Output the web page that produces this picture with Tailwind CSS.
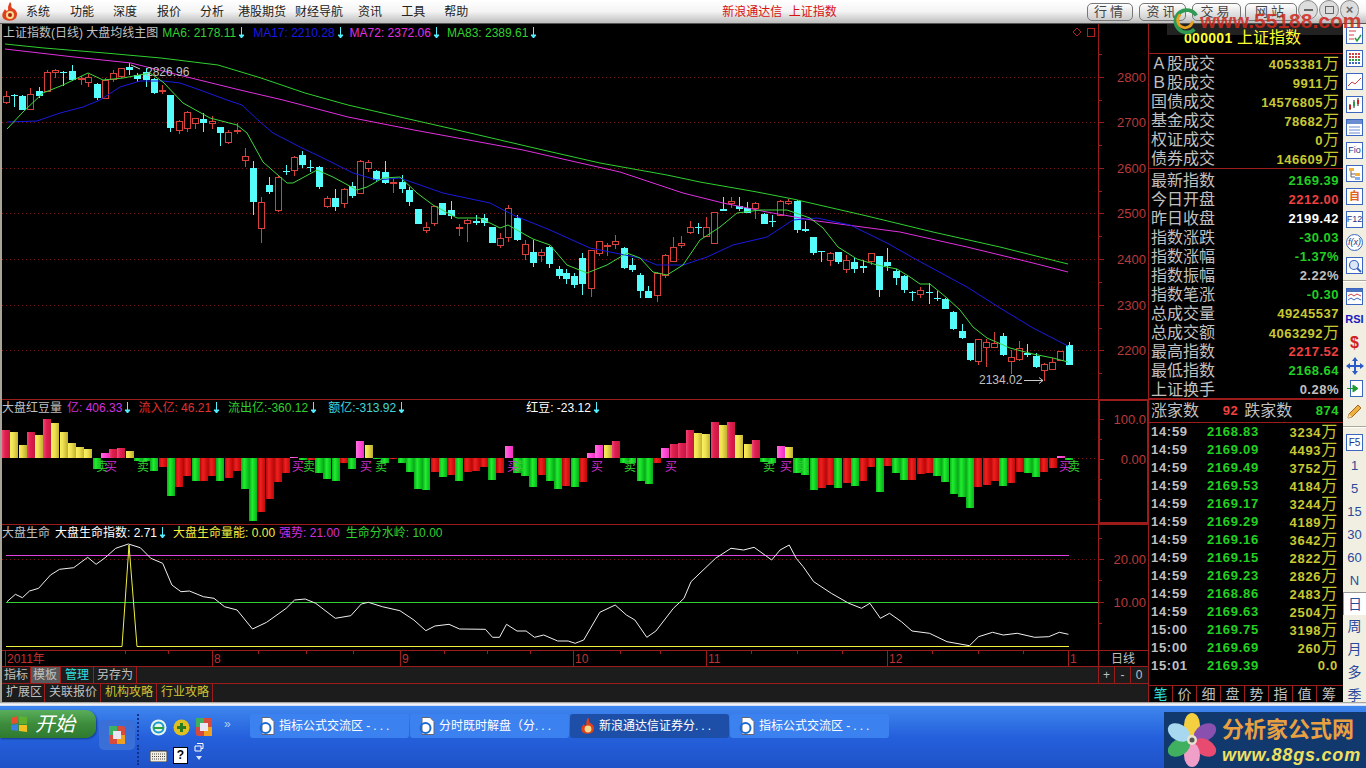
<!DOCTYPE html>
<html lang="zh-CN">
<head>
  <meta charset="UTF-8" />
  <title>新浪通达信 上证指数</title>
  <script src="https://cdn.jsdelivr.net/npm/@tailwindcss/browser@4"></script>
</head>
<body class="w-[1366px] h-[768px] overflow-hidden bg-black font-['Liberation_Sans','Noto_Sans_CJK_SC',sans-serif]">

  <!-- menu bar -->
  <header class="relative z-10 h-[24px] flex items-center bg-gradient-to-b from-white via-[#f4f4f4] to-[#bdbdbd] border-b border-[#555] text-[12px] text-[#222]">
    <svg class="absolute left-[1px] top-[1px]" width="18" height="21" viewBox="0 0 18 21">
      <path d="M9 1 C12 4 8 6 13 8 C16 10 17 13 15 17 C13 20 5 21 2 17 C0 13 3 10 4 8 C5 11 8 10 7 7 C7 5 8 3 9 1Z" fill="#e0401c" />
      <circle cx="9" cy="14" r="4" fill="#f4d88c" />
      <circle cx="9" cy="14" r="2" fill="#b02010" />
    </svg>
    <nav class="flex pl-[26px]">
      <span>系统</span><span class="ml-[20px]">功能</span><span class="ml-[19px]">深度</span><span class="ml-[20px]">报价</span><span class="ml-[19px]">分析</span><span class="ml-[14px]">港股期货</span><span class="ml-[9px]">财经导航</span><span class="ml-[15px]">资讯</span><span class="ml-[19px]">工具</span><span class="ml-[19px]">帮助</span>
    </nav>
    <span class="ml-[254px] text-[#d81010] whitespace-nowrap">新浪通达信&nbsp;&nbsp;上证指数</span>
    <div class="ml-auto flex items-center gap-[6px] pr-[69px] text-[13px] text-[#444] tracking-[3px]">
      <span class="w-[46px] h-[18px] flex items-center justify-center rounded-[5px] border border-[#777] bg-gradient-to-b from-white to-[#ccc]">行情</span>
      <span class="w-[47px] h-[18px] flex items-center justify-center rounded-[5px] border border-[#777] bg-gradient-to-b from-white to-[#ccc]">资讯</span>
      <span class="w-[49px] h-[18px] flex items-center justify-center rounded-[5px] border border-[#777] bg-gradient-to-b from-white to-[#ccc]">交易</span>
      <span class="-ml-[2px] w-[52px] h-[18px] flex items-center justify-center rounded-[5px] border border-[#777] bg-gradient-to-b from-white to-[#ccc]">网站</span>
    </div>
    <!-- window buttons -->
    <div class="absolute right-[7px] top-0 flex gap-[1px]">
      <span class="w-[20px] h-[20px] rounded-full border border-[#888] bg-[#ddd] flex items-center justify-center"><span class="w-[9px] h-[2px] bg-[#666]"></span></span>
      <span class="w-[20px] h-[20px] rounded-full border border-[#888] bg-[#ddd] flex items-center justify-center"><span class="w-[9px] h-[8px] border border-[#666]"></span></span>
      <span class="w-[19px] h-[20px] rounded-full border border-[#888] bg-[#ddd] flex items-center justify-center text-[13px] font-bold text-[#666]">×</span>
    </div>
    <!-- forum watermark -->
    <svg class="absolute left-[1172px] top-[7px]" width="28" height="28" viewBox="0 0 30 30">
      <path d="M26 9 A12 12 0 1 0 24 24" fill="none" stroke="#2f9a52" stroke-width="4" />
      <path d="M9 8 A8 8 0 1 0 22 15" fill="none" stroke="#e8a020" stroke-width="3" />
    </svg>
    <span class="absolute left-[1200px] top-[9px] text-[21px] leading-[24px] font-bold text-[#d0281c]/85 whitespace-nowrap">www.55188.com</span>
  </header>

  <main class="flex h-[678px]">
    <!-- left: chart panels -->
    <section class="w-[1148px] flex flex-col border-l-2 border-[#a8a498]">
      <div class="relative h-[376px] border-b border-[#9c1c1c]">
        <svg id="kline" class="block" width="1146" height="375" viewBox="2 24 1146 375"></svg>
        <div class="absolute left-[1px] top-[1px] flex items-center h-[16px] text-[12px] text-[#c0c0c0]">
          <span>上证指数(日线) 大盘均线主图</span>
          <span class="ml-[4px] text-[#30d030]">MA6: 2178.11</span>
          <svg class="ml-[2px]" width="7" height="12" viewBox="0 0 7 12"><path d="M3.5 0V11M1 8h5l-2.500 3z" stroke="#55eeff" fill="#55eeff" /></svg>
          <span class="ml-[8px] text-[#1a1ae0]">MA17: 2210.28</span>
          <svg class="ml-[2px]" width="7" height="12" viewBox="0 0 7 12"><path d="M3.5 0V11M1 8h5l-2.500 3z" stroke="#55eeff" fill="#55eeff" /></svg>
          <span class="ml-[6px] text-[#e030e0]">MA72: 2372.06</span>
          <svg class="ml-[2px]" width="7" height="12" viewBox="0 0 7 12"><path d="M3.5 0V11M1 8h5l-2.500 3z" stroke="#55eeff" fill="#55eeff" /></svg>
          <span class="ml-[7px] text-[#30d030]">MA83: 2389.61</span>
          <svg class="ml-[2px]" width="7" height="12" viewBox="0 0 7 12"><path d="M3.5 0V11M1 8h5l-2.500 3z" stroke="#55eeff" fill="#55eeff" /></svg>
        </div>
      </div>

      <div class="relative h-[125px] border-b border-[#9c1c1c]">
        <svg id="beans" class="block" width="1146" height="124" viewBox="2 400 1146 124"></svg>
        <div class="absolute left-0 top-0 flex items-center h-[16px] text-[12px] text-[#c0c0c0]">
          <span>大盘红豆量</span>
          <span class="ml-[5px] text-[#d030e0]">亿: 406.33</span>
          <svg class="ml-[2px]" width="7" height="12" viewBox="0 0 7 12"><path d="M3.5 0V11M1 8h5l-2.500 3z" stroke="#55eeff" fill="#55eeff" /></svg>
          <span class="ml-[7px] text-[#e03030]">流入亿: 46.21</span>
          <svg class="ml-[2px]" width="7" height="12" viewBox="0 0 7 12"><path d="M3.5 0V11M1 8h5l-2.500 3z" stroke="#55eeff" fill="#55eeff" /></svg>
          <span class="ml-[8px] text-[#30d030]">流出亿:-360.12</span>
          <svg class="ml-[2px]" width="7" height="12" viewBox="0 0 7 12"><path d="M3.5 0V11M1 8h5l-2.500 3z" stroke="#55eeff" fill="#55eeff" /></svg>
          <span class="ml-[11px] text-[#40d8d8]">额亿:-313.92</span>
          <svg class="ml-[2px]" width="7" height="12" viewBox="0 0 7 12"><path d="M3.5 0V11M1 8h5l-2.500 3z" stroke="#55eeff" fill="#55eeff" /></svg>
          <span class="ml-[121px] text-white">红豆: -23.12</span>
          <svg class="ml-[2px]" width="7" height="12" viewBox="0 0 7 12"><path d="M3.5 0V11M1 8h5l-2.500 3z" stroke="#55eeff" fill="#55eeff" /></svg>
        </div>
      </div>

      <div class="relative h-[126px] border-b border-[#9c1c1c]">
        <svg id="life" class="block" width="1146" height="125" viewBox="2 525 1146 125"></svg>
        <div class="absolute left-0 top-0 flex items-center h-[16px] text-[12px] text-[#c0c0c0]">
          <span>大盘生命</span>
          <span class="ml-[5px] text-white">大盘生命指数: 2.71</span>
          <svg class="ml-[2px]" width="7" height="12" viewBox="0 0 7 12"><path d="M3.5 0V11M1 8h5l-2.500 3z" stroke="#55eeff" fill="#55eeff" /></svg>
          <span class="ml-[7px] text-[#f0f040]">大盘生命量能: 0.00</span>
          <span class="ml-[4px] text-[#d030e0]">强势: 21.00</span>
          <span class="ml-[6px] text-[#30d030]">生命分水岭: 10.00</span>
        </div>
      </div>

      <!-- time axis -->
      <div class="h-[16px] border-b border-[#9c1c1c]">
        <svg id="timeaxis" class="block" width="1146" height="15" viewBox="2 651 1146 15"></svg>
      </div>

      <!-- tabs -->
      <div class="h-[17px] flex items-stretch bg-[#1c1c1c] border-b border-[#9c1c1c] text-[12px] leading-[16px] text-[#c0c0c0]">
        <span class="w-[29px] pl-[2px] border-r border-[#9c1c1c]">指标</span>
        <span class="w-[30px] pl-[2px] bg-[#5a5a5a] border-r border-[#9c1c1c]">模板</span>
        <span class="w-[33px] pl-[4px] border-r border-[#9c1c1c] text-[#30e0e0]">管理</span>
        <span class="w-[43px] pl-[3px] border-r border-[#9c1c1c]">另存为</span>
        <div class="ml-auto w-[50px] flex border-l border-[#9c1c1c] text-center">
          <span class="w-[16px] border-r border-[#9c1c1c]">+</span>
          <span class="w-[16px] border-r border-[#9c1c1c]">-</span>
          <span class="w-[16px]">0</span>
        </div>
      </div>
      <div class="h-[18px] flex items-stretch bg-[#1c1c1c] text-[12px] leading-[17px] text-[#c0c0c0]">
        <span class="w-[43px] pl-[4px] border-r border-[#9c1c1c]">扩展区</span>
        <span class="w-[56px] pl-[4px] border-r border-[#9c1c1c]">关联报价</span>
        <span class="w-[56px] pl-[4px] border-r border-[#9c1c1c] text-[#c8c832]">机构攻略</span>
        <span class="w-[56px] pl-[4px] border-r border-[#9c1c1c] text-[#c8c832]">行业攻略</span>
      </div>
    </section>

    <!-- right: quote panel -->
    <aside class="relative w-[195px] flex flex-col bg-black border-l border-[#9c1c1c] text-[#c0c0c0]">
      <div class="absolute left-[18px] top-0 w-[176px] h-[11px] bg-[#222]"></div>
      <div class="relative h-[30px] shrink-0 border-b border-[#9c1c1c] pt-[4px] pl-[35px] text-[16px] leading-[20px] text-[#ffff30]">
        <span class="font-bold text-[14px] tracking-[0.3px]">000001</span> 上证指数
      </div>
      <div class="h-[115px] shrink-0 border-b border-[#9c1c1c] pl-[2px] pr-[4px] text-[16px]">
        <div class="h-[19px] flex items-center justify-between"><span>Ａ股成交</span><span class="text-[#c8c832]"><b class="text-[13px] tracking-[0.5px]">4053381</b>万</span></div>
        <div class="h-[19px] flex items-center justify-between"><span>Ｂ股成交</span><span class="text-[#c8c832]"><b class="text-[13px] tracking-[0.5px]">9911</b>万</span></div>
        <div class="h-[19px] flex items-center justify-between"><span>国债成交</span><span class="text-[#c8c832]"><b class="text-[13px] tracking-[0.5px]">14576805</b>万</span></div>
        <div class="h-[19px] flex items-center justify-between"><span>基金成交</span><span class="text-[#c8c832]"><b class="text-[13px] tracking-[0.5px]">78682</b>万</span></div>
        <div class="h-[19px] flex items-center justify-between"><span>权证成交</span><span class="text-[#c8c832]"><b class="text-[13px] tracking-[0.5px]">0</b>万</span></div>
        <div class="h-[19px] flex items-center justify-between"><span>债券成交</span><span class="text-[#c8c832]"><b class="text-[13px] tracking-[0.5px]">146609</b>万</span></div>
      </div>
      <div class="h-[231px] shrink-0 border-b-2 border-[#9c1c1c] pt-[2px] pl-[2px] pr-[4px] text-[16px]">
        <div class="h-[19px] flex items-center justify-between"><span>最新指数</span><b class="text-[13px] tracking-[0.5px] text-[#22d022]">2169.39</b></div>
        <div class="h-[19px] flex items-center justify-between"><span>今日开盘</span><b class="text-[13px] tracking-[0.5px] text-[#f04040]">2212.00</b></div>
        <div class="h-[19px] flex items-center justify-between"><span>昨日收盘</span><b class="text-[13px] tracking-[0.5px] text-white">2199.42</b></div>
        <div class="h-[19px] flex items-center justify-between"><span>指数涨跌</span><b class="text-[13px] tracking-[0.5px] text-[#22d022]">-30.03</b></div>
        <div class="h-[19px] flex items-center justify-between"><span>指数涨幅</span><b class="text-[13px] tracking-[0.5px] text-[#22d022]">-1.37%</b></div>
        <div class="h-[19px] flex items-center justify-between"><span>指数振幅</span><b class="text-[13px] tracking-[0.5px]">2.22%</b></div>
        <div class="h-[19px] flex items-center justify-between"><span>指数笔涨</span><b class="text-[13px] tracking-[0.5px] text-[#22d022]">-0.30</b></div>
        <div class="h-[19px] flex items-center justify-between"><span>总成交量</span><b class="text-[13px] tracking-[0.5px] text-[#c8c832]">49245537</b></div>
        <div class="h-[19px] flex items-center justify-between"><span>总成交额</span><span class="text-[#c8c832]"><b class="text-[13px] tracking-[0.5px]">4063292</b>万</span></div>
        <div class="h-[19px] flex items-center justify-between"><span>最高指数</span><b class="text-[13px] tracking-[0.5px] text-[#f04040]">2217.52</b></div>
        <div class="h-[19px] flex items-center justify-between"><span>最低指数</span><b class="text-[13px] tracking-[0.5px] text-[#22d022]">2168.64</b></div>
        <div class="h-[19px] flex items-center justify-between"><span>上证换手</span><b class="text-[13px] tracking-[0.5px]">0.28%</b></div>
      </div>
      <div class="h-[23px] shrink-0 flex items-center border-b border-[#9c1c1c] pl-[2px] pr-[4px] text-[16px]">
        <span>涨家数</span><b class="ml-auto text-[13px] tracking-[0.5px] text-[#f04040]">92</b><span class="ml-[6px]">跌家数</span><b class="ml-auto text-[13px] tracking-[0.5px] text-[#22d022]">874</b>
      </div>
      <div id="ticks" class="shrink-0 pl-[2px] pr-[5px] text-[13px] font-bold"></div>
      <nav class="mt-auto h-[17px] flex border-t border-[#9c1c1c] text-[14px] leading-[16px] text-center">
        <span class="w-[24px] border-r border-[#9c1c1c] text-[#30e0e0]">笔</span>
        <span class="w-[24px] border-r border-[#9c1c1c]">价</span>
        <span class="w-[24px] border-r border-[#9c1c1c]">细</span>
        <span class="w-[24px] border-r border-[#9c1c1c]">盘</span>
        <span class="w-[24px] border-r border-[#9c1c1c]">势</span>
        <span class="w-[24px] border-r border-[#9c1c1c]">指</span>
        <span class="w-[24px] border-r border-[#9c1c1c]">值</span>
        <span class="w-[24px]">筹</span>
      </nav>
    </aside>

    <!-- far right: tool strip -->
    <div class="w-[23px] overflow-hidden bg-[#f1efe2] text-[#2a4a9a] text-[13px] flex flex-col items-center">
      <span class="h-[23px] shrink-0 flex items-center"><svg width="17" height="17" viewBox="0 0 17 17"><rect x=".5" y=".5" width="16" height="16" fill="#fff" stroke="#3a66c0" /><path d="M3 4h7M3 8h5M3 12h5" stroke="#d04040" /><path d="M9 11l2 3 4-6" fill="none" stroke="#2a9a40" stroke-width="1.500" /></svg></span>
      <span class="h-[23px] shrink-0 flex items-center"><svg width="17" height="17" viewBox="0 0 17 17"><rect x=".5" y=".5" width="16" height="16" fill="#fff" stroke="#3a66c0" /><path d="M3 4h11M3 7h11" stroke="#d04040" stroke-width="2" stroke-dasharray="2 1" /><path d="M3 10h11" stroke="#2a9a40" stroke-width="2" stroke-dasharray="2 1" /><path d="M3 13h11" stroke="#3a66c0" stroke-width="2" stroke-dasharray="2 1" /></svg></span>
      <span class="h-[23px] shrink-0 flex items-center"><svg width="17" height="17" viewBox="0 0 17 17"><rect x=".5" y=".5" width="16" height="16" fill="#fff" stroke="#3a66c0" /><path d="M2 13l4-4 3 2 6-6" fill="none" stroke="#d04040" /></svg></span>
      <span class="h-[23px] shrink-0 flex items-center"><svg width="17" height="17" viewBox="0 0 17 17"><rect x=".5" y=".5" width="16" height="16" fill="#fff" stroke="#3a66c0" /><path d="M4 8v6M8 4v8M12 2v8" stroke="#222" /><rect x="3" y="9" width="2" height="4" fill="#d02020" /><rect x="7" y="6" width="2" height="4" fill="#2a9a40" /><rect x="11" y="4" width="2" height="4" fill="#d02020" /></svg></span>
      <span class="h-[23px] shrink-0 flex items-center"><svg width="17" height="17" viewBox="0 0 17 17"><rect x=".5" y=".5" width="16" height="16" fill="#fff" stroke="#3a66c0" /><rect x="1" y="1" width="15" height="4" fill="#6a8cd0" /><path d="M3 8h11M3 11h11M3 14h11" stroke="#6a8cd0" /></svg></span>
      <span class="h-[23px] shrink-0 flex items-center"><span class="w-[17px] h-[17px] flex items-center justify-center border border-[#3a66c0] bg-white text-[9px] leading-none text-[#1a3a8a]">Fio</span></span>
      <span class="h-[23px] shrink-0 flex items-center"><svg width="17" height="17" viewBox="0 0 17 17"><rect x=".5" y=".5" width="16" height="16" fill="#fff" stroke="#3a66c0" /><path d="M5 6v6h4M5 9h4" fill="none" stroke="#666" /><rect x="3" y="3" width="5" height="3" fill="#f0b040" /><rect x="9" y="8" width="5" height="3" fill="#f0b040" /><rect x="9" y="12" width="5" height="3" fill="#80b0f0" /></svg></span>
      <span class="h-[23px] shrink-0 flex items-center"><span class="w-[17px] h-[17px] flex items-center justify-center border border-[#3a66c0] bg-white text-[11px] leading-none font-bold text-[#e06020]">自</span></span>
      <span class="h-[23px] shrink-0 flex items-center"><span class="w-[17px] h-[17px] flex items-center justify-center border border-[#3a66c0] bg-white text-[9px] leading-none text-[#1a3a8a]">F12</span></span>
      <span class="h-[23px] shrink-0 flex items-center"><span class="w-[17px] h-[17px] flex items-center justify-center rounded-full border border-[#3a66c0] bg-white text-[9px] leading-none italic text-[#1a3a8a]">f(x)</span></span>
      <span class="h-[23px] shrink-0 flex items-center"><svg width="17" height="17" viewBox="0 0 17 17"><rect x=".5" y=".5" width="16" height="16" fill="#fff" stroke="#3a66c0" /><circle cx="8" cy="8" r="4.500" fill="#dce8fa" stroke="#3a66c0" stroke-width="1.200" /><path d="M11 11l4 4" stroke="#3a66c0" stroke-width="2" /></svg></span>
      <span class="h-[8px] w-full shrink-0 flex items-center"><span class="w-full h-[2px] bg-white border-t border-[#aca899]"></span></span>
      <span class="h-[23px] shrink-0 flex items-center"><svg width="17" height="17" viewBox="0 0 17 17"><rect x=".5" y=".5" width="16" height="16" fill="#fff" stroke="#3a66c0" /><rect x="1" y="1" width="15" height="3" fill="#4a70c0" /><path d="M2 8l3-2 3 2 3-2 4 2" fill="none" stroke="#d04040" /><path d="M2 12l3-2 3 2 3-2 4 2" fill="none" stroke="#3a66c0" /></svg></span>
      <span class="h-[23px] shrink-0 flex items-center text-[11px] font-bold text-[#1a1ac0]">RSI</span>
      <span class="h-[23px] shrink-0 flex items-center text-[16px] font-bold text-[#d02020]">$</span>
      <span class="h-[23px] shrink-0 flex items-center"><svg width="18" height="18" viewBox="0 0 18 18"><path d="M9 0l3 4h-2v4h4V6l4 3-4 3v-2h-4v4h2l-3 4-3-4h2v-4H4v2L0 9l4-3v2h4V4H6z" fill="#2a5ac8" /></svg></span>
      <span class="h-[23px] shrink-0 flex items-center"><svg width="17" height="17" viewBox="0 0 17 17"><rect x="4.500" y=".5" width="12" height="16" fill="#fff" stroke="#3a66c0" /><path d="M1 8.500h6V5l5 3.500-5 3.500V9" fill="#1a9a30" stroke="#1a9a30" /></svg></span>
      <span class="h-[23px] shrink-0 flex items-center"><svg width="17" height="17" viewBox="0 0 17 17"><path d="M2 15l1-4 9-9 3 3-9 9z" fill="#f0b040" stroke="#a06820" /><path d="M2 15l1-4 3 3z" fill="#f0dcb0" /></svg></span>
      <span class="h-[8px] w-full shrink-0 flex items-center"><span class="w-full h-[2px] bg-white border-t border-[#aca899]"></span></span>
      <span class="h-[23px] shrink-0 flex items-center"><span class="w-[17px] h-[17px] flex items-center justify-center border border-[#3a66c0] bg-white text-[10px] leading-none text-[#1a3a8a]">F5</span></span>
      <span class="h-[23px] shrink-0 flex items-center">1</span>
      <span class="h-[23px] shrink-0 flex items-center">5</span>
      <span class="h-[23px] shrink-0 flex items-center">15</span>
      <span class="h-[23px] shrink-0 flex items-center">30</span>
      <span class="h-[23px] shrink-0 flex items-center">60</span>
      <span class="h-[23px] shrink-0 flex items-center">N</span>
      <span class="h-[23px] w-full shrink-0 flex items-center justify-center bg-white border-t border-l border-[#999] text-[14px]">日</span>
      <span class="h-[23px] shrink-0 flex items-center text-[14px]">周</span>
      <span class="h-[23px] shrink-0 flex items-center text-[14px]">月</span>
      <span class="h-[23px] shrink-0 flex items-center text-[14px]">多</span>
      <span class="h-[23px] shrink-0 flex items-center text-[14px]">季</span>
    </div>
  </main>

  <div class="h-[4px] bg-gradient-to-b from-[#888] via-white to-[#c8d4ee]"></div>

  <!-- windows taskbar -->
  <footer class="h-[62px] flex items-start bg-gradient-to-b from-[#3f86ee] via-[#2560dc] to-[#1f52c8] text-[12px] text-white">
    <div class="mt-[4px] w-[96px] h-[28px] flex items-center pl-[10px] gap-[7px] rounded-r-[10px] bg-gradient-to-b from-[#5aae5a] via-[#3c8c3c] to-[#2f7a30] shadow-[1px_1px_2px_#123a8a]">
      <svg width="18" height="18" viewBox="0 0 18 18">
        <path d="M1 3l7-2v7l-7 1z" fill="#e8502c" /><path d="M9 1l8 1v7H9z" fill="#60b030" /><path d="M1 10l7-1v7l-7-1z" fill="#3a80e0" /><path d="M9 10h8v7l-8-1z" fill="#f0c020" />
      </svg>
      <span class="text-[20px] leading-none italic">开始</span>
    </div>
    <div class="ml-[3px] mt-[14px] w-[36px] h-[30px] flex items-center justify-center rounded-[5px] bg-[#3a6fd8]">
      <svg width="16" height="18" viewBox="0 0 16 18"><rect width="16" height="18" rx="2" fill="#d84a3c" /><rect width="8" height="9" fill="#3cb060" /><rect x="8" y="9" width="8" height="9" fill="#f0a020" /><rect x="4" y="5" width="8" height="8" fill="#e8e8f4" /></svg>
    </div>
    <div class="ml-[2px] w-[113px] h-full flex flex-col">
      <div class="mt-[8px] h-[26px] flex items-center border-l-2 border-dotted border-[#12308a] pl-[11px] gap-[6px]">
        <svg width="17" height="17" viewBox="0 0 17 17"><circle cx="8.500" cy="8.500" r="8" fill="#e8f4e8" /><circle cx="8.500" cy="8.500" r="5" fill="none" stroke="#1a9ad0" stroke-width="2" /><path d="M4 9h9" stroke="#2aa040" stroke-width="2" /></svg>
        <svg width="17" height="17" viewBox="0 0 17 17"><circle cx="8.500" cy="8.500" r="8" fill="#e0c020" /><path d="M8.500 4v9M4 8.500h9" stroke="#2a7a20" stroke-width="3" /></svg>
        <svg width="16" height="18" viewBox="0 0 16 18"><rect width="16" height="18" rx="2" fill="#d84a3c" /><rect width="8" height="9" fill="#3cb060" /><rect x="8" y="9" width="8" height="9" fill="#f0a020" /><rect x="4" y="5" width="8" height="8" fill="#e8e8f4" /></svg>
        <span class="ml-[6px] -mt-[6px] text-[#b8d0f4]">»</span>
      </div>
      <div class="mt-[5px] h-[20px] flex items-center border-l-2 border-dotted border-[#12308a] pl-[11px] gap-[6px]">
        <svg width="17" height="13" viewBox="0 0 17 13"><rect y="2" width="17" height="11" rx="1" fill="#f4f0e0" stroke="#333" /><path d="M2 5h13M2 7.500h13M2 10h13" stroke="#444" stroke-dasharray="1 1" /></svg>
        <span class="w-[15px] h-[17px] bg-white border border-black text-black text-[12px] font-bold leading-[15px] text-center">?</span>
        <svg class="-mt-[6px]" width="10" height="18" viewBox="0 0 10 18"><path d="M3 .5h6v5H7M1 3h6v5H1z" fill="none" stroke="#fff" /><path d="M2 13h6l-3 4z" fill="#dde6f8" /></svg>
      </div>
    </div>
    <div class="mt-[8px] flex gap-[1px]">
      <div class="w-[159px] h-[24px] flex items-center gap-[4px] pl-[9px] rounded-[3px] bg-[#3c81f0] overflow-hidden">
        <svg width="16" height="18" viewBox="0 0 16 18"><path d="M3 .5h8l4 4v13H3z" fill="#fff" stroke="#667" /><circle cx="6.500" cy="11" r="5" fill="none" stroke="#1a6ad0" stroke-width="2" /></svg>
        <span class="whitespace-nowrap">指标公式交流区 <span class="tracking-[3px]">-...</span></span>
      </div>
      <div class="w-[159px] h-[24px] flex items-center gap-[4px] pl-[9px] rounded-[3px] bg-[#3c81f0] overflow-hidden">
        <svg width="16" height="18" viewBox="0 0 16 18"><path d="M3 .5h8l4 4v13H3z" fill="#fff" stroke="#667" /><circle cx="6.500" cy="11" r="5" fill="none" stroke="#1a6ad0" stroke-width="2" /></svg>
        <span class="whitespace-nowrap">分时既时解盘（分<span class="tracking-[3px]">...</span></span>
      </div>
      <div class="w-[159px] h-[24px] flex items-center gap-[3px] pl-[10px] rounded-[3px] bg-[#1d4fa8] overflow-hidden">
        <svg width="16" height="18" viewBox="0 0 18 21"><path d="M9 1 C12 4 8 6 13 8 C16 10 17 13 15 17 C13 20 5 21 2 17 C0 13 3 10 4 8 C5 11 8 10 7 7 C7 5 8 3 9 1Z" fill="#e0401c" /><circle cx="9" cy="14" r="4" fill="#f4d88c" /></svg>
        <span class="whitespace-nowrap">新浪通达信证券分<span class="tracking-[3px]">...</span></span>
      </div>
      <div class="w-[159px] h-[24px] flex items-center gap-[4px] pl-[9px] rounded-[3px] bg-[#3c81f0] overflow-hidden">
        <svg width="16" height="18" viewBox="0 0 16 18"><path d="M3 .5h8l4 4v13H3z" fill="#fff" stroke="#667" /><circle cx="6.500" cy="11" r="5" fill="none" stroke="#1a6ad0" stroke-width="2" /></svg>
        <span class="whitespace-nowrap">指标公式交流区 <span class="tracking-[3px]">-...</span></span>
      </div>
    </div>
    <!-- site logo -->
    <div class="ml-auto mt-[6px] w-[202px] h-[56px] flex items-center bg-[#11396e]">
      <svg class="shrink-0" width="56" height="56" viewBox="-28 -28 56 56">
        <ellipse cx="0" cy="-15" rx="8" ry="12" fill="#f4d040" />
        <ellipse cx="0" cy="-15" rx="8" ry="12" fill="#8a50b0" transform="rotate(60)" />
        <ellipse cx="0" cy="-15" rx="8" ry="12" fill="#e84a70" transform="rotate(120)" />
        <ellipse cx="0" cy="-15" rx="8" ry="12" fill="#f0a0c8" transform="rotate(180)" />
        <ellipse cx="0" cy="-15" rx="8" ry="12" fill="#40b060" transform="rotate(240)" />
        <ellipse cx="0" cy="-15" rx="8" ry="12" fill="#a8d8f0" transform="rotate(300)" />
        <circle r="5" fill="#e8e4d0" /><circle r="2.500" fill="#555" />
      </svg>
      <div class="ml-[2px] flex flex-col">
        <span class="text-[22px] leading-[26px] font-bold text-[#e8a040] whitespace-nowrap">分析家公式网</span>
        <span class="mt-[3px] text-[18px] leading-[18px] tracking-[0.8px] font-bold italic text-[#f0e060] whitespace-nowrap">www.88gs.com</span>
      </div>
    </div>
  </footer>

  <script>
    const RED = '#d8403c', CYAN = '#54fcfc', LINE = '#9c1c1c', AXIS = '#b83a3a';

    // candles read off the reference: [x, bodyTop, bodyBottom, high, low, colour], per crop at 3x
    const segA = [
      [18,124,140,108,146,'r'],[42,120,121,118,155,'c'],[66,123,165,120,165,'c'],[90,118,163,100,165,'r'],[118,108,124,97,130,'c'],
      [142,50,107,45,108,'r'],[166,44,50,42,68,'r'],[190,50,53,47,92,'c'],[216,48,74,30,78,'c'],[242,68,70,62,90,'r'],
      [265,65,82,58,95,'r'],[290,88,130,85,135,'c'],[314,76,128,70,130,'r'],[340,53,72,45,82,'r'],[364,40,62,38,70,'r'],
      [388,36,46,25,60,'c'],[412,60,72,55,80,'c'],[438,52,75,38,95,'c'],[463,72,113,70,116,'c'],[487,105,109,90,118,'r'],
      [511,120,218,120,230,'c'],[538,198,224,195,236,'r'],[562,171,218,168,230,'r'],[586,190,203,188,222,'r'],[610,193,203,175,232,'c'],
      [636,199,204,183,222,'r'],[661,217,233,215,272,'c'],[685,232,261,225,268,'r'],[710,225,229,203,238,'r'],[736,303,314,280,335,'r'],
      [760,340,440,318,480,'c'],[784,442,520,425,563,'r'],[808,390,412,367,418,'c'],[835,365,465,362,470,'r'],[859,349,351,330,360,'c'],
      [883,305,345,303,362,'r'],[907,300,330,288,340,'c'],[931,335,340,315,350,'c'],[958,337,395,333,402,'c'],[982,430,452,422,458,'r'],
      [1006,430,456,403,468,'c'],[1031,403,443,400,458,'r'],[1057,392,422,380,428,'c'],[1081,318,413,316,415,'r'],[1105,322,340,315,350,'r'],
      [1129,347,375,345,382,'c'],[1156,350,385,318,388,'c'],[1180,382,385,370,415,'r']
    ];
    const segB = [
      [5,95,118,75,130,'c'],[28,120,157,112,167,'c'],[55,177,222,177,222,'c'],[79,232,240,217,248,'r'],[103,168,218,168,228,'r'],
      [127,158,194,158,196,'c'],[152,180,198,153,208,'c'],[178,231,235,222,258,'r'],[202,210,220,208,275,'r'],[227,213,220,196,225,'c'],
      [253,204,219,193,228,'c'],[277,232,278,232,278,'c'],[301,263,285,248,293,'r'],[325,175,260,166,275,'r'],[351,204,270,195,272,'c'],
      [376,283,313,270,330,'r'],[400,306,339,270,350,'c'],[424,307,314,296,335,'r'],[448,291,342,288,353,'c'],[476,357,378,347,387,'c'],
      [499,370,386,358,402,'c'],[523,378,405,370,413,'c'],[547,324,402,310,435,'c'],[574,301,415,300,440,'r'],[598,274,310,272,318,'r'],
      [622,284,288,278,318,'r'],[646,274,282,255,298,'r'],[673,295,354,292,358,'c'],[697,345,359,325,365,'c'],[721,375,423,370,443,'c'],
      [745,423,443,408,445,'c'],[772,368,436,367,455,'r'],[796,316,376,312,385,'r'],[820,292,332,262,335,'r'],[844,280,286,258,295,'r'],
      [871,230,245,213,252,'r'],[895,232,235,220,253,'c']
    ];
    const segC = [
      [18,142,168,112,170,'r'],[43,97,190,97,192,'r'],[70,88,92,52,93,'c'],[94,63,68,52,85,'r'],[118,78,88,52,92,'c'],
      [142,85,98,65,98,'c'],[166,68,85,66,117,'r'],[193,102,132,100,132,'c'],[217,123,126,105,140,'c'],[241,62,104,60,106,'r'],
      [265,62,70,58,76,'r'],[292,62,150,60,160,'c'],[316,146,153,122,157,'c'],[340,172,218,172,224,'c'],[364,213,216,212,245,'c'],
      [391,220,240,216,257,'r'],[415,217,245,215,252,'c'],[439,240,268,226,278,'r'],[463,247,266,235,278,'c'],[490,259,263,240,278,'c'],
      [514,220,243,219,255,'r'],[538,228,330,228,350,'c'],[562,246,258,205,272,'c'],[589,272,293,268,315,'c'],[613,288,330,286,338,'c'],
      [637,336,339,332,362,'c'],[661,331,342,320,354,'r'],[688,335,338,310,372,'c'],[712,354,357,332,362,'c'],[736,358,387,355,388,'c'],
      [760,396,447,394,450,'c'],[787,453,474,432,478,'c'],[811,489,540,488,543,'c'],[835,478,542,478,555,'r'],[859,487,502,478,562,'r'],
      [883,488,500,457,502,'r'],[910,468,525,460,528,'c'],[934,530,542,510,582,'r'],[958,505,537,484,542,'r'],[982,520,526,492,532,'c'],
      [1009,528,560,518,563,'c'],[1033,553,571,548,602,'r'],[1057,547,566,533,570,'r'],[1081,512,541,512,542,'r'],[1108,496,554,487,554,'c']
    ];

    const ma6 = [7,129,23,112,43,93,63,85,88,73,103,80,123,78,150,73,163,82,183,103,210,118,237,125,247,133,263,162,287,183,293,183,317,170,333,177,357,190,367,187,383,178,400,177,417,193,433,205,457,218,480,218,500,228,508,225,533,239,550,245,567,265,587,273,607,265,627,253,640,258,653,272,667,275,683,265,700,240,720,227,737,213,760,210,787,210,810,218,823,228,838,247,857,259,877,265,897,269,910,277,920,284,930,284,947,298,960,310,973,327,987,338,1010,348,1033,354,1053,358,1068,362];
    const ma17 = [7,122,37,121,60,113,83,107,100,100,120,87,140,81,163,81,180,83,200,90,227,100,242,105,260,122,273,133,300,147,323,158,353,173,377,180,400,178,443,193,490,203,513,215,550,230,590,248,620,254,640,258,657,265,683,265,707,257,733,245,767,237,793,220,817,218,850,225,887,243,917,260,967,287,1000,308,1033,328,1068,346];
    const ma72 = [5,49,74,57,131,63,187,77,240,90,283,100,348,117,414,130,523,150,620,172,683,193,723,203,767,212,817,221,900,232,967,247,1033,263,1068,272];
    const ma83 = [5,44,44,48,105,53,161,58,218,65,261,78,305,93,348,105,400,117,453,129,543,150,600,163,667,175,700,182,757,192,793,199,867,216,933,232,1000,247,1040,257,1068,264];

    const bars = 'c28 y26 y13 c26 y23 c39 y35 y26 y15 y11 y9 g11 m5 c9 c10 y7 g3 g3 g13 r9 g38 r29 r18 g23 r23 r18 g23 r20 r13 g31 g63 r54 r41 r24 r15 m1 g2 r2 g15 g21 g23 r5 g11 m17 y13 g1 g5 r1 g5 g14 g31 g32 r14 g19 r17 g23 r14 r13 r9 g22 r15 m12 g15 g18 g29 r17 g23 g31 r28 g29 r24 m5 m13 y13 c17 g5 g5 g23 g26 r5 m10 c14 c15 c28 y25 y24 c36 y33 c36 y23 y14 c18 g4 g5 m12 y11 g15 g17 g32 r30 r27 g30 r25 g28 r23 r9 g34 r8 g15 g22 r22 r16 r15 g18 g24 g36 g39 g50 r29 r27 r23 g28 r25 r14 g15 g19 r14 r10 m2 g2'.split(' ');
    const signals = [['卖',102],['买',111],['卖',143],['买',298],['卖',309],['买',366],['卖',381],['买',513],['卖',520],['买',597],['卖',630],['买',671],['卖',769],['买',786],['卖',803],['买',1065],['卖',1074]];

    const lifeLine = [10,230,22,208,32,218,42,198,55,190,72,150,85,133,105,128,125,97,137,118,150,98,165,70,183,57,200,68,215,100,232,115,245,180,258,200,270,198,290,215,305,220,320,245,338,255,360,312,380,292,408,250,420,225,435,222,450,235,478,280,500,272,515,237,525,232,545,245,570,257,590,285,607,317,620,303,640,298,655,312,692,313,702,337,712,337,722,298,737,318,750,318,762,337,775,330,795,348,810,348,820,355,832,345,855,262,877,240,893,270,905,285,922,337,935,318,960,250,975,220,985,170,1005,130,1020,100,1042,70,1060,75,1075,67,1100,105,1112,75,1125,60,1135,100,1145,125,1160,170,1185,205,1210,235,1228,250,1240,235,1255,280,1268,265,1285,290,1300,318,1325,325,1350,350,1382,362,1395,335,1415,322,1430,330,1450,325,1475,337,1495,335,1510,322,1523,328];

    function poly(pts, color) {
      return `<polyline points="${pts.join(' ')}" fill="none" stroke="${color}" stroke-width="1" />`;
    }
    function grid(ys) {
      return ys.map(y => `<line x1="2" x2="1098" y1="${y}.5" y2="${y}.5" stroke="#7a1414" stroke-dasharray="1 3" />`).join('');
    }
    function yAxis(top, bottom, labels, minor) {
      let s = `<line x1="1098.5" x2="1098.5" y1="${top}" y2="${bottom}" stroke="${LINE}" />`;
      labels.forEach(([text, y]) => {
        s += `<line x1="1098" x2="1104" y1="${y}.5" y2="${y}.5" stroke="${LINE}" />`;
        s += `<text x="1146" y="${y + 5}" text-anchor="end" font-size="13" fill="${AXIS}">${text}</text>`;
      });
      minor.forEach(y => { s += `<line x1="1098" x2="1102" y1="${y}.5" y2="${y}.5" stroke="${LINE}" />`; });
      return s;
    }
    function candle(ox, oy, c) {
      const x = Math.round(ox + c[0] / 3) + 0.5;
      const y = v => Math.round(oy + v / 3);
      const top = y(c[1]), bot = Math.max(y(c[2]), top + 1), hi = y(c[3]), lo = y(c[4]);
      if (c[5] === 'c') {
        return `<line x1="${x}" x2="${x}" y1="${hi}" y2="${lo}" stroke="${CYAN}" /><rect x="${x - 3.5}" y="${top}" width="7" height="${bot - top}" fill="${CYAN}" />`;
      }
      return `<line x1="${x}" x2="${x}" y1="${hi}" y2="${top}" stroke="${RED}" /><line x1="${x}" x2="${x}" y1="${bot}" y2="${lo}" stroke="${RED}" />` +
        `<rect x="${x - 3}" y="${top + 0.5}" width="6" height="${bot - top}" fill="#000" stroke="${RED}" />`;
    }

    // main candle chart
    let k = grid([77, 122, 168, 213, 259, 305, 350]);
    k += yAxis(24, 399, [['2800', 77], ['2700', 122], ['2600', 168], ['2500', 213], ['2400', 259], ['2300', 305], ['2200', 350]], [54, 100, 145, 191, 236, 282, 328, 373]);
    k += '<g shape-rendering="crispEdges">';
    k += segA.map(c => candle(0, 55, c)).join('') + segB.map(c => candle(400, 150, c)).join('') + segC.map(c => candle(700, 180, c)).join('');
    k += '</g>';
    k += poly(ma83, '#30d030') + poly(ma72, '#e030e0') + poly(ma17, '#1a1ae0') + poly(ma6, '#3fd83f');
    k += `<path d="M131 65l9 4" stroke="#ccc" fill="none" /><text x="146" y="76" font-size="12" fill="#c0c0c0">2826.96</text>`;
    k += `<text x="979" y="384" font-size="12" fill="#c0c0c0">2134.02</text><path d="M1024 380.500h19M1039 377.500l4 3-4 3" stroke="#ccc" fill="none" />`;
    k += `<path d="M1077 28l4 4-4 4-4-4z" fill="none" stroke="#b02020" /><rect x="1087.500" y="28.500" width="7" height="8" fill="none" stroke="#b02020" />`;
    document.getElementById('kline').innerHTML = k;

    // red bean histogram
    const grads = { c: ['#f04878', '#e02050', '#c81840'], y: ['#f8f060', '#f0e050', '#c0b030'], m: ['#ff70e0', '#ff50d8', '#f030c0'], r: ['#b00808', '#f02020', '#c00808'], g: ['#08a818', '#20ee30', '#08b018'] };
    let b = '<defs>' + Object.entries(grads).map(([n, s]) => `<linearGradient id="g${n}"><stop offset="0" stop-color="${s[0]}" /><stop offset=".4" stop-color="${s[1]}" /><stop offset="1" stop-color="${s[2]}" /></linearGradient>`).join('') + '</defs>';
    b += `<line x1="1070" x2="1098" y1="458.500" y2="458.500" stroke="#7a1414" stroke-dasharray="1 3" />`;
    b += '<g shape-rendering="crispEdges">';
    bars.forEach((item, i) => {
      const kind = item[0], h = Number(item.slice(1));
      const x = 2 + i * (1063 / (bars.length - 1));
      const up = kind !== 'r' && kind !== 'g';
      b += `<rect x="${x.toFixed(1)}" y="${up ? 458 - h : 458}" width="8" height="${h}" fill="url(#g${kind})" />`;
    });
    b += '</g>';
    signals.forEach(([t, x]) => {
      b += `<text x="${x}" y="471" text-anchor="middle" font-size="12" fill="${t === '买' ? '#d030d0' : '#30d030'}">${t}</text>`;
    });
    b += yAxis(400, 524, [['100.0', 419], ['0.00', 459]], [439, 479, 499]);
    b += `<rect x="1099" y="400" width="49" height="123" fill="none" stroke="${LINE}" stroke-width="2" />`;
    document.getElementById('beans').innerHTML = b;

    // life index
    let l = grid([559]);
    l += `<line x1="6" x2="1069" y1="555.500" y2="555.500" stroke="#e040e0" />`;
    l += `<line x1="6" x2="1098" y1="602.500" y2="602.500" stroke="#30d030" />`;
    l += `<polyline points="6,646.500 122,646.500 129,545 137,646.500 1069,646.500" fill="none" stroke="#f0f040" />`;
    const lifePts = [];
    for (let i = 0; i < lifeLine.length; i += 2) lifePts.push((lifeLine[i] / 1.4255).toFixed(1), (525 + lifeLine[i + 1] / 3).toFixed(1));
    l += poly(lifePts, '#f0f0f0');
    l += yAxis(525, 650, [['20.00', 559], ['10.00', 602]], [580, 623, 538]);
    document.getElementById('life').innerHTML = l;

    // time axis
    let t = '';
    [[5, '2011年'], [212, '8'], [400, '9'], [573, '10'], [706, '11'], [887, '12'], [1068, '1']].forEach(([x, label]) => {
      t += `<line x1="${x}.5" x2="${x}.5" y1="651" y2="666" stroke="${LINE}" /><text x="${x + 2}" y="663" font-size="12" fill="#c03030">${label}</text>`;
    });
    [125, 168, 258, 306, 353, 444, 487, 530, 620, 660, 751, 797, 842, 932, 978, 1023].forEach(x => {
      t += `<line x1="${x}.5" x2="${x}.5" y1="651" y2="654" stroke="${LINE}" />`;
    });
    t += `<line x1="1098.5" x2="1098.5" y1="651" y2="666" stroke="${LINE}" /><text x="1111" y="663" font-size="12" fill="#c0c0c0">日线</text>`;
    document.getElementById('timeaxis').innerHTML = t;

    // tick rows
    const ticks = [['14:59','2168.83','3234万'],['14:59','2169.09','4493万'],['14:59','2169.49','3752万'],['14:59','2169.53','4184万'],['14:59','2169.17','3244万'],['14:59','2169.29','4189万'],['14:59','2169.16','3642万'],['14:59','2169.15','2822万'],['14:59','2169.23','2826万'],['14:59','2168.86','2483万'],['14:59','2169.63','2504万'],['15:00','2169.75','3198万'],['15:00','2169.69','260万'],['15:01','2169.39','0.0']];
    document.getElementById('ticks').innerHTML = ticks.map(r => {
      const vol = r[2].replace('万', '');
      const unit = r[2].endsWith('万') ? '<span class="text-[16px] font-normal">万</span>' : '';
      return `<div class="h-[18px] flex items-center tracking-[0.7px]"><span class="w-[56px]">${r[0]}</span><span class="w-[52px] text-[#22d022]">${r[1]}</span><span class="flex-1 text-right text-[#c8c832]">${vol}${unit}</span></div>`;
    }).join('');
  </script>
</body>
</html>
